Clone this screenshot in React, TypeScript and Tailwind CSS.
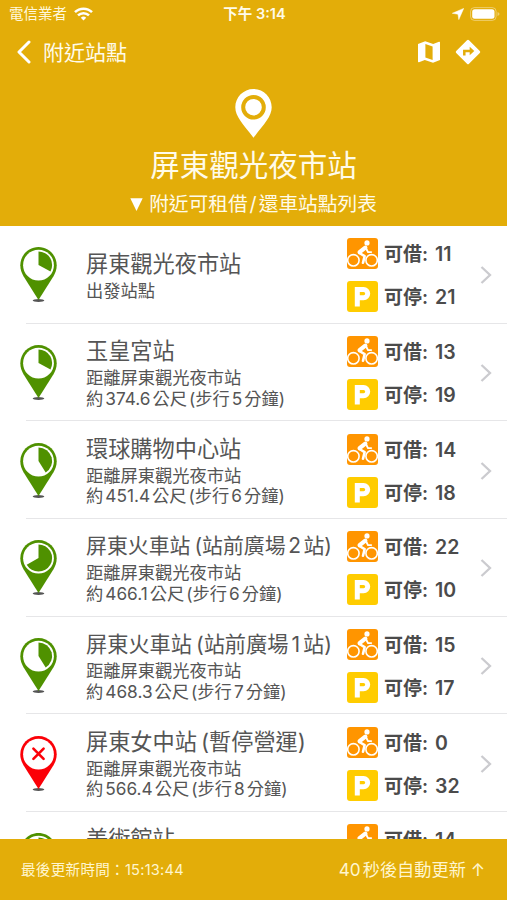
import React from 'react';

type Station = {
  name: React.ReactNode;
  note?: string;
  distance?: string;
  minutes?: string;
  bikes: number;
  docks?: number;
  angle: number;
  closed?: boolean;
  titleClass?: string;
};

const stations: Station[] = [
  { name: '屏東觀光夜市站', note: '出發站點', bikes: 11, docks: 21, angle: 118 },
  { name: '玉皇宮站', distance: '374.6', minutes: '5', bikes: 13, docks: 19, angle: 118 },
  { name: '環球購物中心站', distance: '451.4', minutes: '6', bikes: 14, docks: 18, angle: 148 },
  {
    name: <>屏東火車站<span className="ml-[4px]">(站前廣場</span><span className="mx-[2.500px]">2</span>站)</>,
    distance: '466.1',
    minutes: '6',
    bikes: 22,
    docks: 10,
    angle: 240,
    titleClass: 'text-[20.9px]',
  },
  {
    name: <>屏東火車站<span className="ml-[4px]">(站前廣場</span><span className="mx-[3px]">1</span>站)</>,
    distance: '468.3',
    minutes: '7',
    bikes: 15,
    docks: 17,
    angle: 148,
    titleClass: 'text-[21.2px]',
  },
  {
    name: <>屏東女中站<span className="ml-[4px]">(暫停營運)</span></>,
    distance: '566.4',
    minutes: '8',
    bikes: 0,
    docks: 32,
    angle: 0,
    closed: true,
  },
  { name: '美術館站', bikes: 14, angle: 148 },
];

const sector = (angle: number) => {
  const rad = (angle * Math.PI) / 180;
  const x = 18.5 + 13.6 * Math.sin(rad);
  const y = 18 - 13.6 * Math.cos(rad);
  return `M18.5 18V4.4A13.6 13.6 0 ${angle > 180 ? 1 : 0} 1 ${x} ${y}Z`;
};

const StationPin: React.FC<{ angle: number; closed?: boolean }> = ({ angle, closed }) => {
  const color = closed ? '#fb0007' : '#4f9100';
  return (
    <svg className="block h-[56px] w-[37px]" viewBox="0 0 37 56" fill="none">
      <ellipse cx="18.5" cy="53.5" rx="5.8" ry="1.5" fill="#555" />
      <path d="M18.5 0C8.5 0 .3 8.2.3 18.3c0 4.2 1.2 7.5 3.2 10.900L18.500 53l15-23.800c2-3.400 3.200-6.700 3.200-10.900C36.700 8.200 28.500 0 18.500 0Z" fill={color} />
      <circle cx="18.5" cy="18.2" r="15.4" fill="#fff" />
      {closed ? (
        <path d="m13.400 12.700 10.200 10.200m0-10.200L13.400 22.900" stroke={color} strokeWidth="2.6" strokeLinecap="round" />
      ) : (
        <path d={sector(angle)} fill={color} />
      )}
    </svg>
  );
};

const BikeIcon = () => (
  <svg className="block h-[31px] w-[31px] shrink-0" viewBox="0 0 31 31" fill="none">
    <rect width="31" height="31" rx="3" fill="#ff9500" />
    <g stroke="#fff" strokeLinecap="round" strokeLinejoin="round">
      <circle cx="6.4" cy="22.3" r="5.7" strokeWidth="1.6" />
      <circle cx="24.6" cy="22.3" r="5.7" strokeWidth="1.6" />
      <path d="m18.300 9.600-5.700 4.500" strokeWidth="4.2" />
      <path d="m12.400 15 5.200 3.200-1.600 6.600" strokeWidth="2.6" />
      <path d="m18.800 9.800 2.200 4.300h3.200" strokeWidth="1.9" />
    </g>
    <circle cx="20" cy="4.900" r="2.6" fill="#fff" />
  </svg>
);

const ParkingIcon = () => (
  <svg className="block h-[31px] w-[31px] shrink-0" viewBox="0 0 31 31" fill="none">
    <rect width="31" height="31" rx="3" fill="#ffcc00" />
    <path d="M10.300 25.500V8.500h6.300a4.100 4.100 0 0 1 0 8.200h-6.300" stroke="#fff" strokeWidth="5" />
  </svg>
);

const Count: React.FC<{ icon: React.ReactNode; label: string; value: number }> = ({ icon, label, value }) => (
  <div className="flex h-[31px] items-center">
    {icon}
    <div className="ml-[6px] flex pt-[2px] text-[19px] leading-[31px] font-semibold text-[#4b4b4b]">
      {label}:<span className="ml-[7px] text-[19.500px]">{value}</span>
    </div>
  </div>
);

const StationRow: React.FC<{ station: Station }> = ({ station }) => (
  <div className="relative flex h-[97.700px] shrink-0 items-center pt-px">
    <div className="ml-[20px] w-[66px] shrink-0">
      <StationPin angle={station.angle} closed={station.closed} />
    </div>
    <div className={`w-[261px] shrink-0 whitespace-nowrap text-[#555] ${station.note ? '' : 'h-[72px]'}`}>
      <div className={`h-[31px] leading-[28px] ${station.titleClass ?? 'text-[22.200px]'}`}>{station.name}</div>
      {station.note && <div className="text-[17.250px] leading-[20.500px]">{station.note}</div>}
      {station.distance && (
        <div className="text-[17.250px] leading-[20.500px]">
          <div>距離屏東觀光夜市站</div>
          <div>
            約<span className="mx-[2px]">{station.distance}</span>公尺<span className="ml-[2px]">(步行</span>
            <span className="mx-[2px]">{station.minutes}</span>分鐘)
          </div>
        </div>
      )}
    </div>
    <div className="flex h-[74px] flex-col gap-[12px]">
      <Count icon={<BikeIcon />} label="可借" value={station.bikes} />
      {station.docks !== undefined && <Count icon={<ParkingIcon />} label="可停" value={station.docks} />}
    </div>
    {station.docks !== undefined && (
      <svg className="absolute right-[15px] h-[20px] w-[12px]" viewBox="0 0 12 20" fill="none">
        <path d="m1.500 2 8.500 8-8.500 8" stroke="#cbcbcf" strokeWidth="2.300" />
      </svg>
    )}
    <div className="absolute right-0 bottom-0 left-[26px] h-px bg-[#e6e6e8]" />
  </div>
);

const StatusBar = () => (
  <div className="grid h-[27px] grid-cols-3 items-center pr-[7px] pl-[9px] text-[14.500px] leading-[27px]">
    <div className="flex items-center text-[#fff8dc]">
      電信業者
      <svg className="ml-[7px] h-[14px] w-[19px]" viewBox="0 0 19 14" fill="none" stroke="#fff" strokeWidth="2.500">
        <path d="M1 5.200a12 12 0 0 1 17 0M4 8.400a7.800 7.800 0 0 1 11 0" />
        <path d="m9.500 13.600-2.700-2.800a3.900 3.900 0 0 1 5.400 0Z" fill="#fff" stroke="none" />
      </svg>
    </div>
    <div className="text-center font-semibold text-[#fffbe9]">下午 3:14</div>
    <div className="flex items-center justify-end">
      <svg className="mr-[6px] h-[12px] w-[12px]" viewBox="0 0 12 12" fill="#fff">
        <path d="M11.700.4 6.800 11.600 6 6.200.3 5.300Z" stroke="#fff" strokeWidth=".5" />
      </svg>
      <svg className="h-[14px] w-[30px]" viewBox="0 0 30 14" fill="none">
        <rect x=".6" y=".6" width="25.500" height="12.800" rx="3.800" stroke="#fff" strokeOpacity=".4" />
        <rect x="2.200" y="2.200" width="22.300" height="9.600" rx="2.500" fill="#fff" />
        <path d="M27.500 5v4c1.500-.5 2-1.200 2-2s-.5-1.500-2-2Z" fill="#fff" fillOpacity=".4" />
      </svg>
    </div>
  </div>
);

const App: React.FC = () => (
  <div className="flex h-[900px] w-[507px] flex-col overflow-hidden bg-white font-['Inter','Noto_Sans_CJK_TC',sans-serif]">
    {/* Header */}
    <header className="h-[226px] shrink-0 bg-[#e3ad09] text-[#fffbe9]">
      <StatusBar />
      <div className="flex h-[50px] items-center pr-[26px] pl-[16px]">
        <svg className="h-[24px] w-[16px]" viewBox="0 0 16 24" fill="none">
          <path d="M13 2 3 12l10 10" stroke="#fff" strokeWidth="3" strokeLinecap="round" strokeLinejoin="round" />
        </svg>
        <div className="ml-[11px] pt-[2px] text-[21px] leading-[30px]">附近站點</div>
        <svg className="ml-auto h-[24px] w-[24px]" viewBox="0 0 24 24" fill="none">
          <path d="m1 4 7.200-2.800 8 2.800L22 1.800q1-.3 1 .6v17.700l-7 2.700-8.200-2.800L2 22.200q-1 .3-1-.6Z" fill="#fff" />
          <path d="m8.400 4 7.200 2.500V20l-7.200-2.500Z" fill="#e3ad09" />
        </svg>
        <svg className="ml-[14px] h-[26px] w-[26px]" viewBox="0 0 26 26" fill="none">
          <path d="M12 1.200q1-1 2 0L24.800 12q1 1 0 2L14 24.800q-1 1-2 0L1.200 14q-1-1 0-2Z" fill="#fff" />
          <path d="M9.300 16.600v-4.700h7" stroke="#e3ad09" strokeWidth="2.500" />
          <path d="m14.700 7.800 4.600 4.200-4.600 4.200Z" fill="#e3ad09" />
        </svg>
      </div>
      <div className="flex flex-col items-center pt-[12px]">
        <svg className="h-[49px] w-[37px]" viewBox="0 0 37 49" fill="none">
          <path d="M18.500 0C8.400 0 .3 8.200.3 18.300c0 9.200 7.600 16.700 18.200 30.500C29.100 35 36.700 27.500 36.700 18.300 36.700 8.200 28.600 0 18.500 0Z" fill="#fff" />
          <circle cx="18.500" cy="18.200" r="10.300" stroke="#e3ad09" strokeWidth="4" />
        </svg>
        <h1 className="mt-[9px] text-[29.500px] leading-[36px]">屏東觀光夜市站</h1>
        <div className="flex items-center pt-[2px] text-[19.700px] leading-[38px]">
          <svg className="mr-[6px] h-[13px] w-[13px]" viewBox="0 0 13 13" fill="#fff">
            <path d="M.3.300h12.400L6.500 13Z" />
          </svg>
          附近可租借<span className="mx-[2px]">/</span>還車站點列表
        </div>
      </div>
    </header>

    {/* Station list */}
    <main className="flex min-h-0 flex-1 flex-col overflow-hidden">
      {stations.map((station, i) => (
        <StationRow key={i} station={station} />
      ))}
    </main>

    {/* Footer */}
    <footer className="flex h-[61px] shrink-0 items-center justify-between bg-[#e3ad09] pt-[1px] pr-[22px] pl-[21px] text-[#fff6cf]">
      <div className="pt-px text-[14.600px] tracking-[0.250px]">最後更新時間：15:13:44</div>
      <div className="text-[17.200px]">
        40<span className="ml-[2px]">秒後自動更新</span> ↑
      </div>
    </footer>
  </div>
);

export default App;
